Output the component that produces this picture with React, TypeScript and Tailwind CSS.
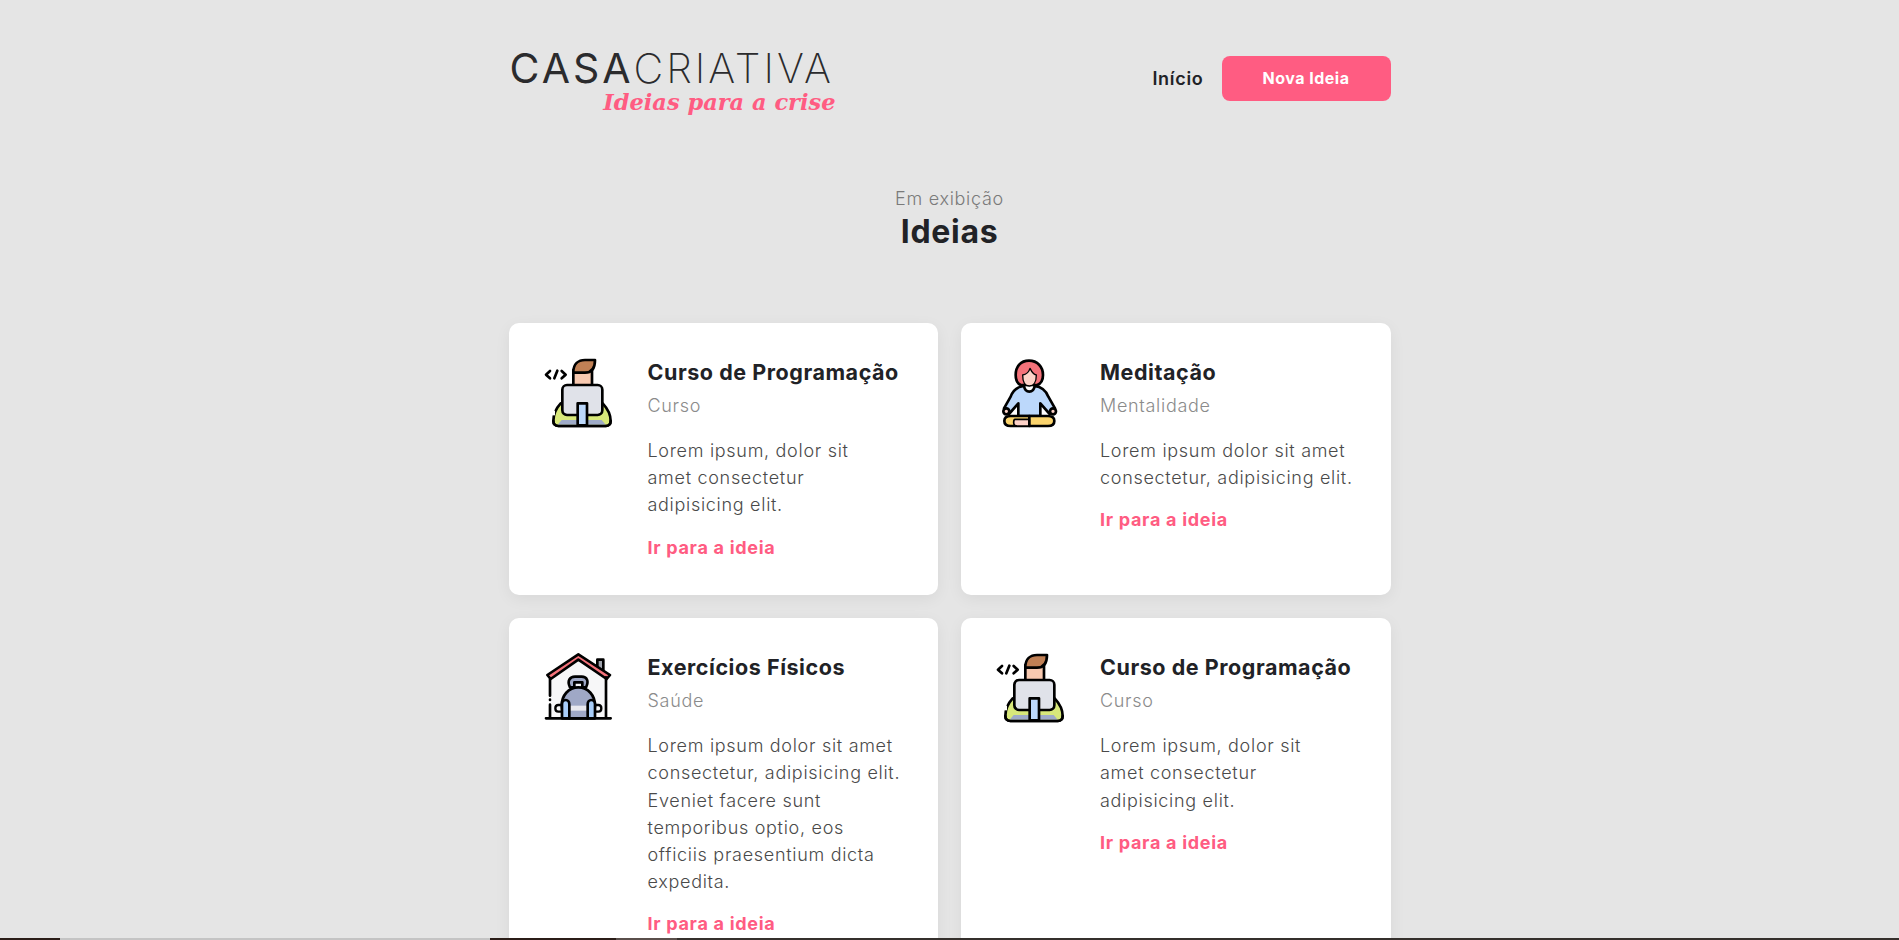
const cards = [
  { icon: "code", title: "Curso de Programação", tag: "Curso", text: "Lorem ipsum, dolor sit\namet consectetur\nadipisicing elit." },
  { icon: "zen", title: "Meditação", tag: "Mentalidade", text: "Lorem ipsum dolor sit amet\nconsectetur, adipisicing elit." },
  { icon: "gym", title: "Exercícios Físicos", tag: "Saúde", text: "Lorem ipsum dolor sit amet\nconsectetur, adipisicing elit.\nEveniet facere sunt\ntemporibus optio, eos\nofficiis praesentium dicta\nexpedita." },
  { icon: "code", title: "Curso de Programação", tag: "Curso", text: "Lorem ipsum, dolor sit\namet consectetur\nadipisicing elit." },
];

function CodeIcon() {
  return (
    <svg viewBox="69 51 210 216" className="w-[70px] h-[72px]" fill="none" stroke="#000" strokeWidth="8" strokeLinejoin="round" strokeLinecap="round">
      <path d="M90 93L78 104l12 11M125 93l12 11-12 11M103 115l9-23" />
      <path d="M122 190C108 205 100 225 100 243c0 9 6 15 15 15h143c8 0 14-6 14-15 0-18-10-38-24-53z" fill="#d8e87a" />
      <path d="M125 240h120l12 14H113z" fill="#9fabc8" stroke="none" />
      <path d="M100 243c0 9 6 15 15 15h143c8 0 14-6 14-15" />
      <rect x="97" y="212" width="8" height="14" fill="#fff" stroke="none" />
      <rect x="160" y="90" width="56" height="48" fill="#f8c9b0" />
      <path d="M160 97c0-25 15-37 35-37h30c0 25-8 38-30 38h-35z" fill="#c08055" />
      <rect x="127" y="135" width="120" height="90" rx="14" fill="#e0e2e9" />
      <rect x="173" y="190" width="28" height="66" fill="#bcd8fb" />
    </svg>
  );
}

function ZenIcon() {
  return (
    <svg viewBox="48 51 210 216" className="w-[70px] h-[72px]" fill="none" stroke="#000" strokeWidth="8" strokeLinejoin="round" strokeLinecap="round">
      <path d="M150 62c-25 0-40 18-40 43 0 15 5 25 15 30h50c12-5 17-17 17-30 0-25-17-43-42-43z" fill="#f4727a" />
      <path d="M131 105c10-2 19-10 22-20 5 10 10 18 19 20 0 20-8 33-21 33s-20-13-20-33z" fill="#fdd2c8" strokeWidth="4" />
      <path d="M135 138c-20 2-33 12-40 32l-20 35 15 17 28-32v38h66v-38l28 32 16-17-20-35c-8-20-21-30-41-32-2 12-9 17-16 17s-14-5-16-17z" fill="#bcd8fb" />
      <path d="M95 228h112c13 0 19 7 19 15 0 9-6 15-19 15H95c-13 0-19-6-19-15 0-8 6-15 19-15z" fill="#fbd46d" />
      <path d="M108 238h43v20h-35c-8 0-12-4-12-10 0-4 1-10 4-10z" fill="#fdd2c8" strokeWidth="5" />
      <path d="M151 228v30" />
      <circle cx="82" cy="214" r="9" fill="#fdd2c8" />
      <circle cx="222" cy="214" r="9" fill="#fdd2c8" />
    </svg>
  );
}

function GymIcon() {
  return (
    <svg viewBox="69 39 210 216" className="w-[70px] h-[72px]" fill="none" stroke="#000" strokeWidth="8" strokeLinejoin="round" strokeLinecap="round">
      <path d="M90 115l85-60 83 60v123H90z" fill="#f7f7f8" stroke="none" />
      <path d="M232 90V62h18v43" fill="#9fa3ad" />
      <path d="M82 108l93-62 95 62-10 12-85-58-83 58z" fill="#f4727a" />
      <path d="M90 120v50M90 197v41M258 115v123M78 238h194" />
      <path d="M90 182v1" />
      <path d="M150 145c-10-20 0-32 15-32h20c15 0 23 12 13 32z" fill="#9fa8c6" />
      <path d="M163 145v-15h24v15" fill="#f7f7f8" />
      <path d="M175 145c-30 0-50 25-50 55 0 18 10 32 23 38h54c13-6 23-20 23-38 0-30-20-55-50-55z" fill="#9fa8c6" />
      <path d="M125 198h-10c-12 0-12 20 0 20h10M225 198h10c12 0 12 20 0 20h-10" strokeWidth="7" />
      <rect x="148" y="200" width="55" height="15" fill="#e8e8ee" stroke="none" />
      <path d="M126 238v-42c0-8 5-13 11-13s11 5 11 13v42z" fill="#a8cdf8" />
      <path d="M203 238v-42c0-8 5-13 11-13s11 5 11 13v42z" fill="#a8cdf8" />
    </svg>
  );
}

function Card({ icon, title, tag, text }: { icon: string; title: string; tag: string; text: string }) {
  return (
    <div className="bg-white rounded-[10px] shadow-[0_4px_16px_rgba(0,0,0,0.06)] pt-[34px] pb-[34.500px] pl-[34px] pr-[20px] flex gap-[35px] h-full">
      <div className="w-[70px] shrink-0">
        {icon === "code" && <CodeIcon />}
        {icon === "zen" && <ZenIcon />}
        {icon === "gym" && <GymIcon />}
      </div>
      <div className="flex-1">
        <h3 className="text-[21.500px] leading-[30px] tracking-[0.55px] font-bold text-[#212226] whitespace-nowrap">{title}</h3>
        <p className="text-[18px] leading-[27px] tracking-[0.7px] mt-[5px] font-light text-[#8b8b8b]">{tag}</p>
        <p className="text-[18px] leading-[27.200px] tracking-[0.7px] mt-[18px] font-light text-[#4a4a4a] whitespace-pre-line">{text}</p>
        <a className="block text-[18px] leading-[27px] tracking-[0.7px] mt-[15px] font-bold text-[#ff5c82]">Ir para a ideia</a>
      </div>
    </div>
  );
}

export default function App() {
  return (
    <div className="h-screen flex flex-col overflow-hidden bg-[#e5e5e5] font-['Inter','Liberation_Sans',sans-serif]">
      <div className="flex-1 min-h-0 overflow-hidden">
        <div className="w-[882px] mx-auto">
          <header className="flex items-center justify-between h-[156px]">
            <div className="w-[330px] mt-[6px]">
              <div className="text-[41px] leading-[40px] text-[#2b2b2d] tracking-[3px] pl-[1px] whitespace-nowrap">
                <span className="font-normal">CASA</span>
                <span className="font-extralight">CRIATIVA</span>
              </div>
              <div className="text-right text-[22.500px] leading-[24px] mt-[2px] pr-[3px] text-[#ff5c82] font-['DejaVu_Serif',serif] font-bold italic whitespace-nowrap">Ideias para a crise</div>
            </div>
            <nav className="flex items-center gap-[18px]">
              <a className="text-[18px] tracking-[0.7px] font-semibold text-[#212226]">Início</a>
              <button className="w-[169px] h-[45px] rounded-[8px] bg-[#ff5c82] text-white text-[16px] tracking-[0.5px] font-bold">Nova Ideia</button>
            </nav>
          </header>
          <section className="text-center mt-[30px]">
            <p className="text-[18px] leading-[26px] tracking-[0.7px] font-light text-[#7a7a7a]">Em exibição</p>
            <h2 className="text-[32px] leading-[40px] tracking-[0.7px] font-bold text-[#212226]">Ideias</h2>
          </section>
          <div className="grid grid-cols-2 gap-[23px] mt-[71px]">
            {cards.map((card, i) => (
              <Card key={i} {...card} />
            ))}
          </div>
        </div>
      </div>
      <div className="h-[2px] shrink-0 flex bg-[#35302c]">
        <div className="w-[60px] bg-[#2b1d18]"></div>
        <div className="w-[430px] bg-[#c4c4c4]"></div>
        <div className="w-[126px] bg-[#2b1d18]"></div>
        <div className="w-[61px] bg-[#5a4f4b]"></div>
      </div>
    </div>
  );
}
